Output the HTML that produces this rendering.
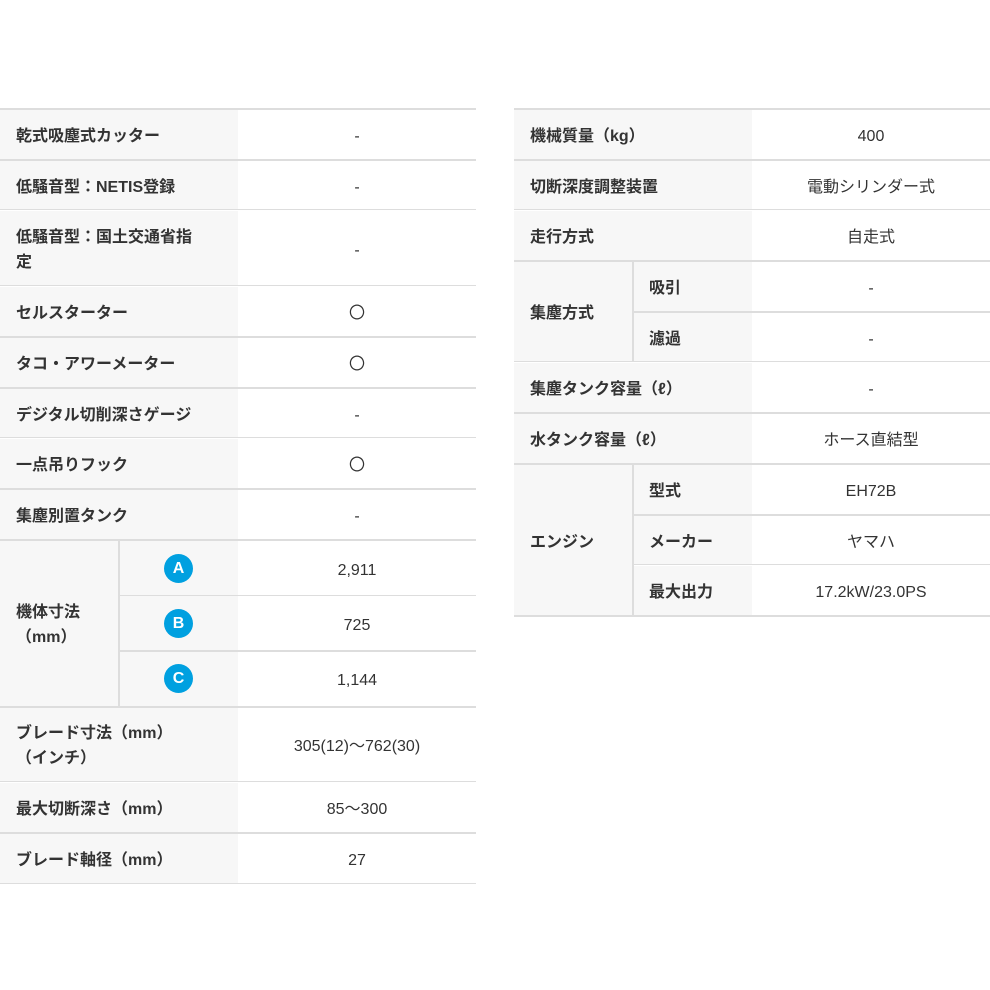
<!DOCTYPE html><html><head><meta charset="utf-8"><style>
body{margin:0;width:990px;height:990px;background:#fff;font-family:"Liberation Sans","Noto Sans CJK JP",sans-serif;color:#333;position:relative;overflow:hidden}
.c{position:absolute;box-sizing:border-box;display:flex;align-items:center;font-size:16px;line-height:25px;padding-top:3px}
.g{background:#f7f7f7;font-weight:bold;padding-left:16px}
.v{justify-content:center;background:#fff}
.h{position:absolute;height:2px;background:#ddd}
.vl{position:absolute;width:2px;background:#ddd}
.ci{width:29px;height:29px;border-radius:50%;background:#00a0e0;color:#fff;font-weight:bold;font-size:16px;display:flex;align-items:center;justify-content:center}
</style></head><body>
<div class="c g" style="left:0;top:110px;width:238px;height:50px">乾式吸塵式カッター</div><div class="c v" style="left:238px;top:110px;width:238px;height:50px">-</div>
<div class="c g" style="left:0;top:161px;width:238px;height:49px">低騒音型：NETIS登録</div><div class="c v" style="left:238px;top:161px;width:238px;height:49px">-</div>
<div class="c g" style="left:0;top:211px;width:238px;height:75px;padding-right:40px">低騒音型：国土交通省指定</div><div class="c v" style="left:238px;top:211px;width:238px;height:75px">-</div>
<div class="c g" style="left:0;top:287px;width:238px;height:50px">セルスターター</div><div class="c v" style="left:238px;top:287px;width:238px;height:50px">〇</div>
<div class="c g" style="left:0;top:338px;width:238px;height:50px">タコ・アワーメーター</div><div class="c v" style="left:238px;top:338px;width:238px;height:50px">〇</div>
<div class="c g" style="left:0;top:389px;width:238px;height:49px">デジタル切削深さゲージ</div><div class="c v" style="left:238px;top:389px;width:238px;height:49px">-</div>
<div class="c g" style="left:0;top:439px;width:238px;height:50px">一点吊りフック</div><div class="c v" style="left:238px;top:439px;width:238px;height:50px">〇</div>
<div class="c g" style="left:0;top:490px;width:238px;height:50px">集塵別置タンク</div><div class="c v" style="left:238px;top:490px;width:238px;height:50px">-</div>
<div class="c g" style="left:0;top:541px;width:119px;height:165px">機体寸法<br>（mm）</div>
<div class="c g" style="left:119px;top:541px;width:119px;height:55px;justify-content:center;padding:0"><div class="ci">A</div></div><div class="c v" style="left:238px;top:541px;width:238px;height:55px">2,911</div>
<div class="c g" style="left:119px;top:596px;width:119px;height:55px;justify-content:center;padding:0"><div class="ci">B</div></div><div class="c v" style="left:238px;top:596px;width:238px;height:55px">725</div>
<div class="c g" style="left:119px;top:651px;width:119px;height:55px;justify-content:center;padding:0"><div class="ci">C</div></div><div class="c v" style="left:238px;top:651px;width:238px;height:55px">1,144</div>
<div class="c g" style="left:0;top:707px;width:238px;height:75px">ブレード寸法（mm）<br>（インチ）</div><div class="c v" style="left:238px;top:707px;width:238px;height:75px">305(12)〜762(30)</div>
<div class="c g" style="left:0;top:783px;width:238px;height:50px">最大切断深さ（mm）</div><div class="c v" style="left:238px;top:783px;width:238px;height:50px">85〜300</div>
<div class="c g" style="left:0;top:834px;width:238px;height:49px">ブレード軸径（mm）</div><div class="c v" style="left:238px;top:834px;width:238px;height:49px">27</div>
<div class="h" style="left:0;width:476px;top:108px"></div>
<div class="h" style="left:0;width:476px;top:159px"></div>
<div class="h" style="left:0;width:476px;top:209px;height:1px"></div>
<div class="h" style="left:0;width:476px;top:285px;height:1px"></div>
<div class="h" style="left:0;width:476px;top:336px"></div>
<div class="h" style="left:0;width:476px;top:387px"></div>
<div class="h" style="left:0;width:476px;top:437px;height:1px"></div>
<div class="h" style="left:0;width:476px;top:488px"></div>
<div class="h" style="left:0;width:476px;top:539px"></div>
<div class="h" style="left:119px;width:357px;top:595px;height:1px"></div>
<div class="h" style="left:119px;width:357px;top:650px"></div>
<div class="h" style="left:0;width:476px;top:706px"></div>
<div class="h" style="left:0;width:476px;top:781px;height:1px"></div>
<div class="h" style="left:0;width:476px;top:832px"></div>
<div class="h" style="left:0;width:476px;top:883px;height:1px"></div>
<div class="vl" style="left:118px;top:541px;height:165px"></div>
<div class="c g" style="left:514px;top:110px;width:238px;height:50px">機械質量（kg）</div><div class="c v" style="left:752px;top:110px;width:238px;height:50px">400</div>
<div class="c g" style="left:514px;top:161px;width:238px;height:49px">切断深度調整装置</div><div class="c v" style="left:752px;top:161px;width:238px;height:49px">電動シリンダー式</div>
<div class="c g" style="left:514px;top:211px;width:238px;height:50px">走行方式</div><div class="c v" style="left:752px;top:211px;width:238px;height:50px">自走式</div>
<div class="c g" style="left:514px;top:262px;width:119px;height:100px">集塵方式</div>
<div class="c g" style="left:633px;top:262px;width:119px;height:50px">吸引</div><div class="c v" style="left:752px;top:262px;width:238px;height:50px">-</div>
<div class="c g" style="left:633px;top:313px;width:119px;height:49px">濾過</div><div class="c v" style="left:752px;top:313px;width:238px;height:49px">-</div>
<div class="c g" style="left:514px;top:363px;width:238px;height:50px">集塵タンク容量（ℓ）</div><div class="c v" style="left:752px;top:363px;width:238px;height:50px">-</div>
<div class="c g" style="left:514px;top:414px;width:238px;height:50px">水タンク容量（ℓ）</div><div class="c v" style="left:752px;top:414px;width:238px;height:50px">ホース直結型</div>
<div class="c g" style="left:514px;top:465px;width:119px;height:151px">エンジン</div>
<div class="c g" style="left:633px;top:465px;width:119px;height:50px">型式</div><div class="c v" style="left:752px;top:465px;width:238px;height:50px">EH72B</div>
<div class="c g" style="left:633px;top:516px;width:119px;height:49px">メーカー</div><div class="c v" style="left:752px;top:516px;width:238px;height:49px">ヤマハ</div>
<div class="c g" style="left:633px;top:566px;width:119px;height:50px">最大出力</div><div class="c v" style="left:752px;top:566px;width:238px;height:50px">17.2kW/23.0PS</div>
<div class="h" style="left:514px;width:476px;top:108px"></div>
<div class="h" style="left:514px;width:476px;top:159px"></div>
<div class="h" style="left:514px;width:476px;top:209px;height:1px"></div>
<div class="h" style="left:514px;width:476px;top:260px"></div>
<div class="h" style="left:633px;width:357px;top:311px"></div>
<div class="h" style="left:514px;width:476px;top:361px;height:1px"></div>
<div class="h" style="left:514px;width:476px;top:412px"></div>
<div class="h" style="left:514px;width:476px;top:463px"></div>
<div class="h" style="left:633px;width:357px;top:514px"></div>
<div class="h" style="left:633px;width:357px;top:564px;height:1px"></div>
<div class="h" style="left:514px;width:476px;top:615px"></div>
<div class="vl" style="left:632px;top:262px;height:100px"></div>
<div class="vl" style="left:632px;top:465px;height:151px"></div>
</body></html>
